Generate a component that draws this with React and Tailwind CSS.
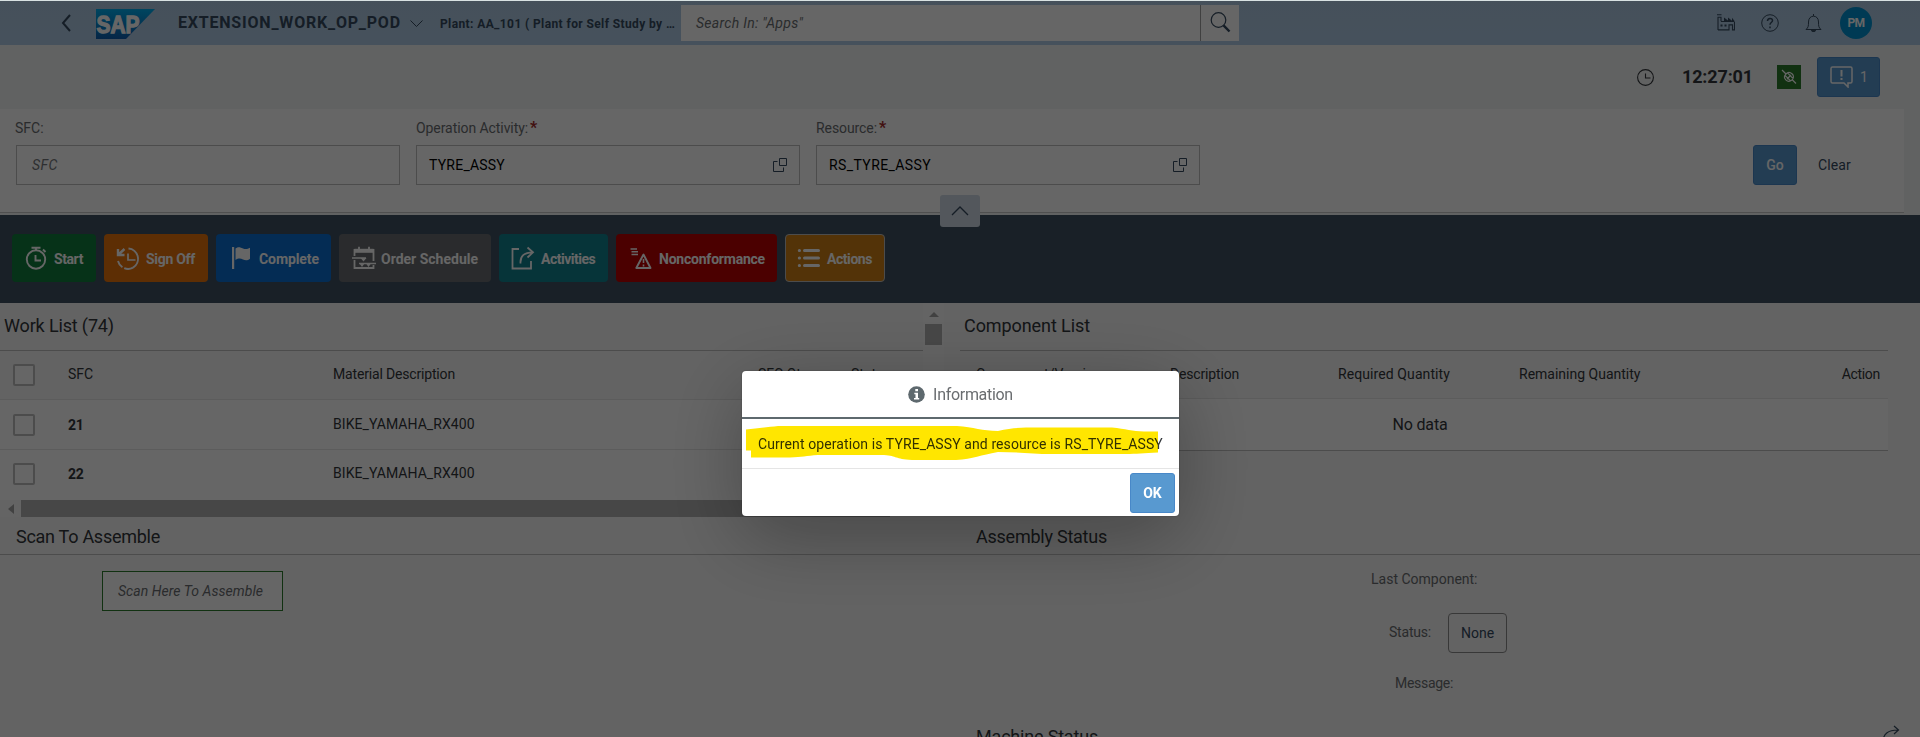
import React from "react";

function T({ className = "", children }) {
  return <span className={"whitespace-nowrap " + className}>{children}</span>;
}

const ico = { fill: "none", stroke: "currentColor" };

function ValueHelp() {
  return (
    <svg width="14" height="14" viewBox="0 0 14 14" {...ico} strokeWidth="1" className="text-[#354a5f]">
      <path d="M6.5.5h7v7h-7zM4.500 3.500h-4v10h10v-4" />
    </svg>
  );
}

function Field({ label, required, value, cls = "", lcls = "", placeholder }) {
  return (
    <div className="flex w-96 flex-col">
      <div className="flex h-9 items-center pt-px text-sm text-[#6a6d70]">
        <T className={lcls}>{label}</T>
        {required && <span className="ml-0.5 text-base font-bold leading-none text-[#a32a2a]">*</span>}
      </div>
      <div className="flex h-10 items-center justify-between border border-[#bfbfbf] bg-white pr-3 text-sm">
        {placeholder ? (
          <T className={"pl-[15px] italic text-[#74777a] " + cls}>{placeholder}</T>
        ) : (
          <>
            <T className={"ml-3 text-black " + cls}>{value}</T>
            <ValueHelp />
          </>
        )}
      </div>
    </div>
  );
}

const icons = {
  start: (
    <svg width="22" height="24" viewBox="0 0 22 24" {...ico} strokeWidth="1.900">
      <circle cx="11" cy="13.500" r="9.200" />
      <path d="M6.500 1.800h9M11 2v2.500M18 3.500l2.500 2.500M10.500 9v5.500h5.500" />
    </svg>
  ),
  signoff: (
    <svg width="24" height="24" viewBox="0 0 24 24" {...ico} strokeWidth="1.900">
      <path d="M12.500 2.500A10.300 10.300 0 0 1 17 21.600" />
      <path d="M17 21.600A10.300 10.300 0 0 1 2 15" strokeDasharray="9 2 20" />
      <path d="M12 7.500v6.500h7.500" strokeWidth="1.700" />
      <path d="M8.500 3L2.500 8.500M2 3v6h6.500" strokeWidth="2.400" />
    </svg>
  ),
  complete: (
    <svg width="20" height="24" viewBox="0 0 20 24" fill="currentColor">
      <path d="M1 1h2.200v22H1zM4.500 2.500c3-2.300 5-1 7.500 0s4.500.8 7-.8v11c-2.500 2-4.500 2-7 .8s-4.500-1.500-7.500.5z" />
    </svg>
  ),
  order: (
    <svg width="24" height="24" viewBox="0 0 24 24" {...ico} strokeWidth="1.800">
      <path d="M2.500 10V4h19v11M2.500 14v8h19v-3" />
      <path d="M2.500 4.800h19" strokeWidth="4" />
      <path d="M7 .8v4M17 .8v4" />
      <path d="M0 12h14M7 17.500h17" strokeWidth="1.300" />
      <path d="M8.500 12l3 3.500 3-3.500zM7.500 17.500l2.500 3.500 2.500-3.500zM14 17.500l2.500 3.500 2.500-3.500z" fill="currentColor" stroke="none" />
    </svg>
  ),
  activities: (
    <svg width="24" height="24" viewBox="0 0 24 24" {...ico} strokeWidth="1.800">
      <path d="M8 3H1.500v19.500h18.500V15" />
      <path d="M9.500 17.500C9 10 13 6.500 22 6.300M16.500 1.500l5.500 4.800-5.500 5.200" />
    </svg>
  ),
  nc: (
    <svg width="22" height="24" viewBox="0 0 22 24" {...ico} strokeWidth="1.500">
      <path d="M.5 3h6.500M1.500 5.800H8M1.500 8.500H8" />
      <path d="M13.500 8.500L6.300 22h14.200z" strokeWidth="1.900" strokeLinejoin="round" />
      <path d="M13.500 13v4M13.500 18.500v2" strokeWidth="1.600" />
    </svg>
  ),
  actions: (
    <svg width="24" height="24" viewBox="0 0 24 24" {...ico} strokeWidth="3" strokeLinecap="round">
      <path d="M7.500 4.500h14M7.500 12h14M7.500 19.500h14M2.300 4.500h.2M2.300 12h.2M2.300 19.500h.2" />
    </svg>
  ),
};

const actions = [
  { icon: "start", label: "Start", t: "tracking-[-0.41px]", cls: "w-[84px] pl-[13px] gap-[7px] bg-[#107e3e]" },
  { icon: "signoff", label: "Sign Off", t: "tracking-[-0.29px]", cls: "w-[104px] pl-3 gap-1.5 bg-[#e9730c]" },
  { icon: "complete", label: "Complete", t: "tracking-[-0.08px]", cls: "w-[115px] pl-[15px] gap-2 bg-[#0a6ed1]" },
  { icon: "order", label: "Order Schedule", t: "", cls: "w-[152px] pl-[13px] gap-[5px] bg-[#6a6d70]" },
  { icon: "activities", label: "Activities", t: "tracking-[-0.5px]", cls: "w-[109px] pl-3 gap-1.5 bg-[#0f828f]" },
  { icon: "nc", label: "Nonconformance", t: "tracking-[-0.22px]", cls: "w-[161px] pl-[14px] gap-[7px] bg-[#bb0000]" },
  { icon: "actions", label: "Actions", t: "tracking-[-0.44px]", cls: "w-[100px] pl-[11px] gap-1.5 bg-[#d08014] border border-[#bfbfbf]" },
];

function Check() {
  return <div className="size-[22px] shrink-0 rounded-[2px] border-2 border-[#bfbfbf] bg-white" />;
}

function WorkRow({ sfc, h }) {
  return (
    <div className={"flex items-center bg-white pl-[13px] text-sm text-[#32363a] " + h}>
      <Check />
      <div className="w-[298px] pl-[33px]"><T className="font-bold tracking-[-0.3px]">{sfc}</T></div>
      <T className="pb-0.5 tracking-[0.06px]">BIKE_YAMAHA_RX400</T>
    </div>
  );
}

export default function App() {
  return (
    <div className="relative flex h-[737px] w-[1920px] flex-col overflow-hidden bg-[#f7f7f7] font-['Roboto','Liberation_Sans',sans-serif] text-[#32363a]">
      <header className="flex h-[45px] shrink-0 items-center bg-linear-to-b from-[#adc9e2] to-[#b0cbe6] text-[#354a5f]">
        <svg width="12" height="18" viewBox="0 0 12 18" {...ico} strokeWidth="2" className="ml-[60px]"><path d="M10 1L3 9l7 8" /></svg>
        <svg width="59" height="30" viewBox="0 0 59 30" className="ml-6 mt-0.5">
          <defs><linearGradient id="sap" x1="0" y1="0" x2="0" y2="1"><stop offset="0" stopColor="#00aeef" /><stop offset="1" stopColor="#0f5fb0" /></linearGradient></defs>
          <path d="M0 0h59L30 30H0z" fill="url(#sap)" />
          <text x="0.500" y="23.800" fontFamily="Liberation Sans, Arial, sans-serif" fontWeight="700" fontSize="24.500" textLength="43" lengthAdjust="spacingAndGlyphs" fill="#fff" stroke="#fff" strokeWidth="1.300">SAP</text>
        </svg>
        <T className="ml-[23px] w-[224px] text-base font-bold tracking-[0.8px]">EXTENSION_WORK_OP_POD</T>
        <svg width="13" height="8" viewBox="0 0 13 8" {...ico} className="ml-2 mt-0.5 shrink-0"><path d="M.5.500l6 6 6-6" /></svg>
        <div className="w-[258px] shrink-0 pl-[17px] pt-0.5 text-xs font-bold"><T className="tracking-[0.39px]">Plant: AA_101 ( Plant for Self Study by …</T></div>
        <div className="flex h-9 w-[558px] shrink-0">
          <div className="flex w-[520px] items-center border-r border-[#a0a0a0] bg-white pl-[15px] text-sm italic text-[#6a6d70]"><T className="tracking-[0.29px]">Search In: "Apps"</T></div>
          <div className="flex flex-1 items-center justify-center bg-white">
            <svg width="21" height="21" viewBox="0 0 21 21" {...ico}><circle cx="8.500" cy="8" r="7.300" strokeWidth="1.200" /><path d="M13.500 13.300l6 6.200" strokeWidth="2.400" /></svg>
          </div>
        </div>
        <div className="ml-auto mr-12 flex items-center">
          <svg width="18" height="17" viewBox="0 0 18 17" {...ico} strokeWidth="1.100"><path d="M0 .8h4.500M1 16V3.200h3v4M1 15.900h11v-5h3.500v5H17.500V8M4 7.500h13.500" /><path d="M7 7V3.500l4 3v-3l4 3.200v-3l2.500 3.300z" fill="currentColor" stroke="none" /><path d="M3.500 11.500h2M7.500 11.500h2" strokeWidth="1.800" /></svg>
          <svg width="18" height="18" viewBox="0 0 18 18" {...ico} className="ml-[26px]"><circle cx="9" cy="9" r="8.300" /><path d="M6.500 7c0-3.500 5-3.300 5-.5 0 2-2.500 2-2.500 4.200M9 12.500v1.700" strokeWidth="1.500" /></svg>
          <svg width="17" height="18" viewBox="0 0 17 18" {...ico} className="ml-[26px]"><path d="M8.500 0v2M1 15.500c2.500-2 2.500-4 2.500-7.500 0-3.500 2-5.800 5-5.800s5 2.300 5 5.800c0 3.500 0 5.500 2.500 7.500z" /><path d="M6.500 16.200h4c0 2.300-4 2.300-4 0z" fill="currentColor" /></svg>
          <div className="ml-[18px] flex size-8 items-center justify-center rounded-full bg-[#0092d1] text-xs font-bold text-white"><T className="tracking-[-0.5px]">PM</T></div>
        </div>
      </header>

      <div className="flex h-16 shrink-0 items-center justify-end bg-[#f3f4f5] pr-10">
        <svg width="17" height="17" viewBox="0 0 17 17" {...ico} strokeWidth="1.100"><circle cx="8.500" cy="8.500" r="7.900" /><path d="M8.500 4.500v4.500h5" /></svg>
        <T className="ml-7 text-lg font-bold tracking-[-0.14px]">12:27:01</T>
        <div className="ml-6 flex size-6 items-center justify-center bg-[#2b7c2b] text-white">
          <svg width="16" height="16" viewBox="0 0 16 16" {...ico} strokeWidth="1.200"><path d="M1 1l4 4M11.500 11l3.500 3.500M3.800 6.200l6 6M6.200 3.600l6 6M5 5C3 7 3 9 4.800 10.800S9 12.600 11 11M5 5C6.800 3 9 3 11 4.800S12.800 9 11 11M10 6l-4 4" /></svg>
        </div>
        <div className="ml-4 flex h-10 w-[63px] items-center rounded-[3px] border border-[#4888c8] bg-[#5899d0] pl-3 text-sm text-white">
          <svg width="23" height="22" viewBox="0 0 23 22" {...ico} strokeWidth="1.500"><path d="M2.500 1h18a1.500 1.500 0 0 1 1.500 1.500v13a1.500 1.500 0 0 1-1.500 1.500H18v4l-4-4H2.500A1.500 1.500 0 0 1 1 15.500v-13A1.500 1.500 0 0 1 2.500 1z" /><path d="M11.500 4v6.500M11.500 12v2" strokeWidth="2" /></svg>
          <span className="ml-[7px]">1</span>
        </div>
      </div>

      <div className="relative h-[106px] shrink-0 bg-[#f3f4f5]">
        <div className="flex h-[104px] w-[1904px] items-start gap-4 border-b border-[#c6c6c6] bg-white pl-4">
          <Field label="SFC:" lcls="-ml-px" cls="tracking-[0.5px]" placeholder="SFC" />
          <Field label="Operation Activity:" lcls="tracking-[-0.07px]" required value="TYRE_ASSY" cls="tracking-[0.23px]" />
          <Field label="Resource:" lcls="tracking-[-0.08px]" required value="RS_TYRE_ASSY" cls="tracking-[0.4px]" />
          <div className="ml-auto mr-[53px] mt-9 flex h-10 items-center text-sm">
            <div className="flex h-10 w-11 items-center justify-center rounded-[3px] border border-[#4888c8] bg-[#5899d0] text-white"><T className="font-medium">Go</T></div>
            <T className="ml-[21px] tracking-[0.14px] text-[#354a5f]">Clear</T>
          </div>
        </div>
        <div className="absolute left-[940px] top-[86px] z-10 flex h-8 w-10 items-center justify-center rounded-[3px] bg-[#cfd9e5] text-[#354a5f]">
          <svg width="18" height="10" viewBox="0 0 18 10" {...ico} strokeWidth="1.300"><path d="M1 9l8-8 8 8" /></svg>
        </div>
      </div>

      <div className="flex h-[88px] shrink-0 items-center gap-2 bg-[#3f5161] pb-2 pl-3 pt-1.5">
        {actions.map((a) => (
          <div key={a.label} className={"flex h-12 items-center rounded-[4px] text-sm font-bold text-white " + a.cls}>
            {icons[a.icon]}
            <T className={"pt-0.5 " + a.t}>{a.label}</T>
          </div>
        ))}
      </div>

      <div className="flex h-[214px] shrink-0">
        <section className="flex w-[923px] flex-col">
          <h2 className="flex h-12 items-center border-b border-[#bfbfbf] pb-0.5 pl-1 text-lg"><T className="tracking-[-0.15px]">Work List (74)</T></h2>
          <div className="flex h-[49px] items-center border-b border-[#e5e5e5] pl-[13px] text-sm">
            <Check />
            <div className="w-[298px] pb-[3px] pl-[33px]"><T>SFC</T></div>
            <div className="w-[425px] pb-[3px]"><T className="tracking-[-0.17px]">Material Description</T></div>
            <div className="w-[93px] pb-[3px]">SFC Qty.</div>
            <div className="pb-[3px]">Status</div>
          </div>
          <WorkRow sfc="21" h="h-[50px] border-b border-[#e5e5e5]" />
          <WorkRow sfc="22" h="h-[50px] pb-0.5" />
          <div className="flex h-[17px] items-center bg-[#fafafa] pl-2">
            <svg width="6" height="10" viewBox="0 0 6 10" className="mr-[7px]"><path d="M6 0v10L0 5z" fill="#a3a3a3" /></svg>
            <div className="h-[17px] w-[869px] bg-[#b2b2b2]" />
          </div>
        </section>
        <div className="flex w-[21px] flex-col items-center bg-[#fafafa] pt-[9px]">
          <svg width="10" height="5" viewBox="0 0 10 5"><path d="M0 5h10L5 0z" fill="#a3a3a3" /></svg>
          <div className="mt-[7px] h-[21px] w-[17px] bg-[#b2b2b2]" />
        </div>
        <section className="ml-4 flex w-[928px] flex-col">
          <h2 className="flex h-12 items-center border-b border-[#bfbfbf] pb-0.5 pl-1 text-lg"><T className="tracking-[-0.08px]">Component List</T></h2>
          <div className="flex h-12 items-center border-b border-[#e5e5e5] pb-0.5 pl-4 text-sm">
            <div className="w-[194px]">Component/Version</div>
            <div className="w-[168px]"><T className="tracking-[-0.17px]">Description</T></div>
            <div className="w-[181px]"><T className="tracking-[0.09px]">Required Quantity</T></div>
            <div><T>Remaining Quantity</T></div>
            <div className="ml-auto mr-2"><T className="tracking-[-0.3px]">Action</T></div>
          </div>
          <div className="flex h-[52px] items-center justify-center border-b border-[#bfbfbf] bg-white pr-2"><T className="text-base tracking-[-0.17px]">No data</T></div>
        </section>
      </div>

      <div className="flex h-[38px] shrink-0 items-center border-b border-[#bfbfbf] pl-4 pt-[3px] text-lg">
        <div className="w-[960px]"><T className="tracking-[-0.27px]">Scan To Assemble</T></div>
        <T className="tracking-[-0.24px]">Assembly Status</T>
      </div>

      <div className="flex flex-1 text-sm text-[#6a6d70]">
        <div className="w-[960px] pl-[102px] pt-4">
          <div className="flex h-10 w-[181px] items-center border border-[#2b7c2b] bg-white pl-[15px] italic"><T className="tracking-[0.05px]">Scan Here To Assemble</T></div>
        </div>
        <div className="flex flex-1 flex-col">
          <div className="flex h-[58px] items-center pb-2.5 pl-[411px]"><T>Last Component:</T></div>
          <div className="flex h-10 items-center pl-[429px]">
            <T className="mb-[3px] w-[42px] tracking-[-0.2px]">Status:</T>
            <div className="ml-[17px] flex h-10 w-[59px] items-center justify-center rounded-[4px] border border-[#8c8c8c] text-[#354a5f]"><T>None</T></div>
          </div>
          <div className="flex h-[60px] items-center pl-[435px]"><T className="tracking-[-0.3px]">Message:</T></div>
          <div className="flex h-6 items-start justify-between overflow-hidden pl-4 pr-5 pt-2.5 text-lg text-[#32363a]">
            <T className="tracking-[-0.19px]">Machine Status</T>
            <svg width="18" height="18" viewBox="0 0 18 18" {...ico} strokeWidth="1.200" className="mt-0.5 text-[#354a5f]"><path d="M1 17C1 9 6 5 16 5M12 1l4.500 4-4.500 4" /></svg>
          </div>
        </div>
      </div>

      <div className="absolute inset-0 z-20 border-t border-[#d9e2e2] bg-black/60">
        <div className="absolute left-[742px] top-[370px] flex h-[145px] w-[437px] flex-col rounded-[4px] bg-white shadow-[0_20px_80px_rgba(0,0,0,0.3),0_0_2px_rgba(0,0,0,0.3)]">
          <div className="flex h-12 items-center justify-center border-b-2 border-[#5e696e] text-base text-[#6a6d70]">
            <svg width="17" height="17" viewBox="0 0 17 17" className="mr-2"><circle cx="8.500" cy="8.500" r="8.300" fill="#5e696e" /><path d="M7.300 3h2.700v2.300H7.300zM6.300 6.800h3.700v5.200h1.200v1.500H6v-1.500h1.500V8.300H6.300z" fill="#fff" /></svg>
            <T className="pt-0.5 tracking-[-0.3px]">Information</T>
          </div>
          <div className="relative flex h-[50px] items-center border-b border-[#e5e5e5] pl-4 text-sm text-[#32363a]">
            <T className="tracking-[0.1px]">Current operation is TYRE_ASSY and resource is RS_TYRE_ASSY</T>
            <svg width="437" height="50" viewBox="0 0 437 50" className="absolute left-0 top-0 mix-blend-multiply">
              <path d="M4 10.500C16 9 27 8 36 7H215C232 8 240 12 256 12C268 9 276 9 284 8.500H370C384 10 390 12 402 12.500H416V33.500C402 34 394 35 384 35H300C285 34 270 33 256 33C238 36 232 40 214 41H170C152 40 156 37 142 36H76C64 37 60 38 48 38.500H9V31.500H4Z" fill="#ffe600" />
            </svg>
          </div>
          <div className="flex flex-1 items-start justify-end pr-1 pt-1">
            <div className="flex h-10 w-[45px] items-center justify-center rounded-[3px] border border-[#4888c8] bg-[#5899d0] text-sm text-white"><T className="font-bold">OK</T></div>
          </div>
        </div>
      </div>
    </div>
  );
}
